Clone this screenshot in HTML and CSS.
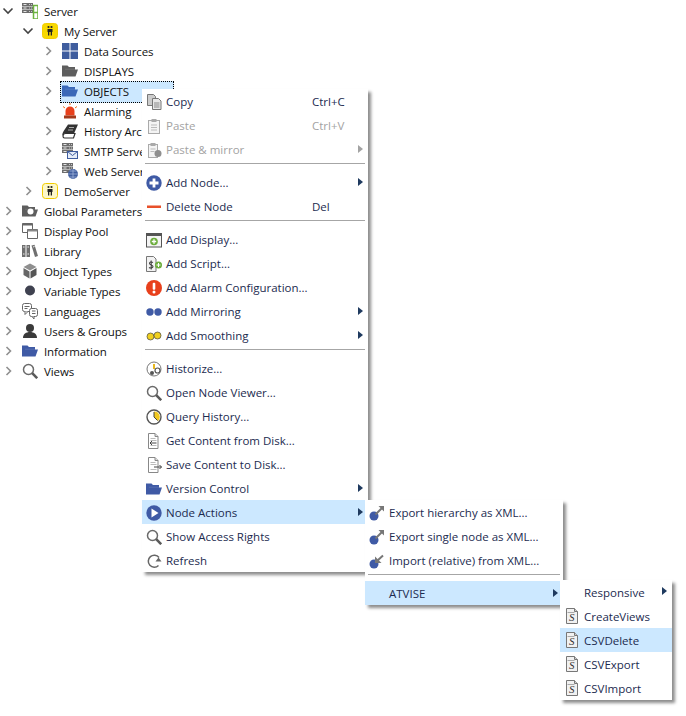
FILE: index.html
```html
<!DOCTYPE html>
<html lang="en">
<head>
<meta charset="utf-8">
<title>Server tree</title>
<link rel="stylesheet" href="styles.css">
</head>
<body>
<svg class="defs" width="0" height="0" aria-hidden="true">
  <symbol id="chev-r" viewBox="0 0 16 16"><path d="M6.500 4 10.500 8l-4 4" fill="none" stroke="#8f8f8f" stroke-width="1.600"/></symbol>
  <symbol id="chev-d" viewBox="0 0 16 16"><path d="M3.500 5.500 8 10l4.500-4.500" fill="none" stroke="#444" stroke-width="1.600"/></symbol>
  <symbol id="folder" viewBox="0 0 16 16"><path d="M0 2.500h5.500l1.500 1.500h6v9.500H0z" fill="currentColor"/><path d="M13 6.500h3L13.500 13.500H13z" fill="currentColor"/><path d="M3 6.200h10" stroke="#fff" stroke-opacity=".12"/></symbol>
  <symbol id="mag" viewBox="0 0 16 16"><circle cx="6.500" cy="6.500" r="5" fill="#fff" stroke="#6a6a6a" stroke-width="1.500"/><path d="M10.200 10.200l5 5" stroke="#5a5a5a" stroke-width="2.600"/></symbol>
  <symbol id="yellow" viewBox="0 0 16 16"><rect x=".5" y=".5" width="15" height="15" rx="3" fill="currentColor" stroke="#f2cc00"/><circle cx="6.500" cy="4" r="1.100" fill="#222"/><circle cx="9.500" cy="4" r="1.100" fill="#222"/><path d="M5.500 6h5v3H10v3.500H8.700V9h-1.400v3.500H6V9h-.5z" fill="#222"/></symbol>
  <symbol id="srv" viewBox="0 0 16 16"><path d="M0 0h11v3H0zM0 3.500h11v3H0zM0 7h11v3H0z" fill="#6d6d6d"/><path d="M1.500 1.500h3M1.500 5h3M1.500 8.500h3M7 1.500h.8M9 1.500h.8M7 5h.8M9 5h.8M7 8.500h.8M9 8.500h.8" stroke="#e4e4e4"/></symbol>
  <symbol id="sdoc" viewBox="0 0 16 16"><path d="M2.500 .5h8l3 3v12h-11z" fill="#f1f1f1" stroke="#777"/><path d="M10.500 .5v3h3" fill="#ccc" stroke="#777"/><rect x="3.500" y="4" width="7" height="1" fill="#aaa"/></symbol>
  <symbol id="export" viewBox="0 0 16 16"><circle cx="5" cy="11" r="4.500" fill="#3f5aa5"/><path d="M6.500 9.500 13 3" stroke="#777" stroke-width="2"/><path d="M9.500 1h5.500v5.500z" fill="#777"/></symbol>
  <symbol id="import" viewBox="0 0 16 16"><circle cx="5" cy="11" r="4.500" fill="#3f5aa5"/><path d="M8 8l6-5.500" stroke="#777" stroke-width="2"/><path d="M6 3.500V10h6.500z" fill="#777"/></symbol>
  <symbol id="arrow-doc" viewBox="0 0 16 16"><path d="M2.500 .5h6.500l3 3v12H2.500z" fill="#fff" stroke="#888"/><path d="M9 .5v3h3" fill="#ddd" stroke="#888"/><path d="M4.500 5.500h5M4.500 7.500h6M4.500 12.500h6" stroke="#bbb"/></symbol>
</svg>

<ul class="tree">
  <li class="row l0"><svg class="chev"><use href="#chev-d"/></svg><svg class="ico"><use href="#srv"/><path d="M11.500 2.500h4.500v7h-4.500zM11.500 9.500h4.500v6.500h-4.500z" fill="#fff" stroke="#6cb33f" stroke-width="1.500"/></svg><span>Server</span></li>
  <li class="row l1"><svg class="chev"><use href="#chev-d"/></svg><svg class="ico c-yellow"><use href="#yellow"/></svg><span>My Server</span></li>
  <li class="row l2"><svg class="chev"><use href="#chev-r"/></svg><svg class="ico" viewBox="0 0 16 16"><path d="M0 0h7.500v7.500H0zM8.500 0H16v7.500H8.500zM0 8.500h7.500V16H0zM8.500 8.500H16V16H8.500z" fill="#3f5d9e"/></svg><span>Data Sources</span></li>
  <li class="row l2"><svg class="chev"><use href="#chev-r"/></svg><svg class="ico c-gray"><use href="#folder"/></svg><span>DISPLAYS</span></li>
  <li class="row l2 selected"><svg class="chev"><use href="#chev-r"/></svg><svg class="ico c-blue"><use href="#folder"/></svg><span class="sel-label">OBJECTS</span></li>
  <li class="row l2"><svg class="chev"><use href="#chev-r"/></svg><svg class="ico" viewBox="0 0 16 16"><path d="M3.500 12.500V8a4.500 4.500 0 0 1 9 0v4.500z" fill="#e8401c"/><rect x="2" y="12.500" width="12" height="3" fill="#a33a1c"/><path d="M1 3.500l2 1.500M15 3.500l-2 1.500M8 0v2" stroke="#e8701c"/></svg><span>Alarming</span></li>
  <li class="row l2"><svg class="chev"><use href="#chev-r"/></svg><svg class="ico" viewBox="0 0 16 16"><path d="M6 1.500h10L12 10.500H3C2 10.500 1 11.200.5 12.500 0 11 1 9 2 7.500z" fill="#333"/><path d="M1 13c0-1.500 1-2.500 2.500-2.500h9.500l-1.500 4.500H2.500C1.500 15 1 14 1 13z" fill="#fff" stroke="#333" stroke-width="1.200"/><path d="M7 4.500h5M6 7h5" stroke="#aaa"/></svg><span>History Archive</span></li>
  <li class="row l2"><svg class="chev"><use href="#chev-r"/></svg><svg class="ico"><use href="#srv"/><svg x="5" y="8" width="11" height="8" viewBox="0 0 11 8"><rect x=".5" y=".5" width="10" height="7" fill="#e6edf8" stroke="#3f5d9e"/><path d="M.5.500l5 4 5-4" fill="none" stroke="#3f5d9e"/></svg></svg><span>SMTP Server</span></li>
  <li class="row l2"><svg class="chev"><use href="#chev-r"/></svg><svg class="ico"><use href="#srv"/><circle cx="11" cy="11" r="5" fill="#3f5d9e"/><path d="M6 11h10M11 6v10M7.500 8h7M7.500 14h7" stroke="#a9bbdf" stroke-width=".7"/></svg><span>Web Server</span></li>
  <li class="row l1"><svg class="chev"><use href="#chev-r"/></svg><svg class="ico c-paleyellow"><use href="#yellow"/></svg><span>DemoServer</span></li>
  <li class="row l0"><svg class="chev"><use href="#chev-r"/></svg><svg class="ico c-gray"><use href="#folder"/><circle cx="8.500" cy="8.500" r="3" fill="#fff"/></svg><span>Global Parameters</span></li>
  <li class="row l0"><svg class="chev"><use href="#chev-r"/></svg><svg class="ico" viewBox="0 0 16 16"><path d="M.5.500h10v9h-10z" fill="#fff" stroke="#666"/><path d="M.5.500h10v2h-10z" fill="#666"/><path d="M5.500 6.500h10v9h-10z" fill="#fff" stroke="#666"/><path d="M5.500 6.500h10v2h-10z" fill="#888"/></svg><span>Display Pool</span></li>
  <li class="row l0"><svg class="chev"><use href="#chev-r"/></svg><svg class="ico" viewBox="0 0 16 16"><path d="M0 2h3.500v12H0zM4.500 2H8v12H4.500z" fill="#6f6f6f"/><path d="M9.500 2.500l3-.8L16 13l-3 1z" fill="#6f6f6f"/><path d="M1 4h1.500M5.500 4H7M1 11h1.500M5.500 11H7M11 4l1.500-.5" stroke="#eee"/></svg><span>Library</span></li>
  <li class="row l0"><svg class="chev"><use href="#chev-r"/></svg><svg class="ico" viewBox="0 0 16 16"><path d="M8 .5l6.500 3.500L8 7.500 1.500 4z" fill="#8f8f8f"/><path d="M1.500 5 7.500 8.500v7L1.500 12z" fill="#666"/><path d="M14.500 5 8.500 8.500v7l6-3.500z" fill="#555"/></svg><span>Object Types</span></li>
  <li class="row l0"><svg class="chev"><use href="#chev-r"/></svg><svg class="ico" viewBox="0 0 16 16"><circle cx="8" cy="7.500" r="5" fill="#3f4250"/></svg><span>Variable Types</span></li>
  <li class="row l0"><svg class="chev"><use href="#chev-r"/></svg><svg class="ico" viewBox="0 0 16 16"><rect x=".5" y=".5" width="9" height="8" rx="2" fill="#fff" stroke="#666"/><path d="M3 8.500v3l3-3" fill="#fff" stroke="#666"/><rect x="7.500" y="5.500" width="8" height="8" rx="2" fill="#fff" stroke="#666"/><path d="M10 13.500l2 2.500v-2.500" fill="#fff" stroke="#666"/><path d="M2.500 3.500h5M2.500 5.500h3M10 8h3.500M10 10.500h3.500" stroke="#666"/></svg><span>Languages</span></li>
  <li class="row l0"><svg class="chev"><use href="#chev-r"/></svg><svg class="ico" viewBox="0 0 16 16"><circle cx="8" cy="5" r="4" fill="#3a3a3a"/><path d="M1 15c0-4 3-6 7-6s7 2 7 6z" fill="#3a3a3a"/></svg><span>Users &amp; Groups</span></li>
  <li class="row l0"><svg class="chev"><use href="#chev-r"/></svg><svg class="ico c-navy"><use href="#folder"/></svg><span>Information</span></li>
  <li class="row l0"><svg class="chev"><use href="#chev-r"/></svg><svg class="ico"><use href="#mag"/></svg><span>Views</span></li>
</ul>

<div class="menu menu-main">
  <div class="item"><svg class="ico" viewBox="0 0 16 16"><path d="M1.500.5h6l2 2v9h-8z" fill="#ccc" stroke="#777"/><path d="M6.500 4.500h6l2.500 2.500v8.500H6.500z" fill="#e8e8e8" stroke="#777"/><path d="M8 9h5.500M8 11h5.500M8 13h5.500" stroke="#888"/></svg><span class="label">Copy</span><span class="key">Ctrl+C</span></div>
  <div class="item off"><svg class="ico" viewBox="0 0 16 16"><rect x="2.500" y="2.500" width="11" height="13" fill="#f4f4f4" stroke="#aaa"/><rect x="5.500" y="1" width="5" height="3" fill="#aaa"/><path d="M5 7h6M5 9.500h6M5 12h6" stroke="#bbb"/></svg><span class="label">Paste</span><span class="key">Ctrl+V</span></div>
  <div class="item off"><svg class="ico" viewBox="0 0 16 16"><rect x="2.500" y="2.500" width="9" height="13" fill="#f4f4f4" stroke="#aaa"/><rect x="4.500" y="1" width="5" height="3" fill="#aaa"/><path d="M4.500 7h5M4.500 9.500h4" stroke="#bbb"/><circle cx="12" cy="11.500" r="3.500" fill="#8f8f8f"/></svg><span class="label">Paste &amp; mirror</span><i class="tri"></i></div>
  <hr class="sep">
  <div class="item"><svg class="ico" viewBox="0 0 16 16"><circle cx="8" cy="8" r="7.700" fill="#3f5aa5"/><path d="M3.500 6.600h3.100V3.500h2.800v3.100h3.100v2.800H9.400v3.100H6.600V9.400H3.500z" fill="#fff"/></svg><span class="label">Add Node...</span><i class="tri"></i></div>
  <div class="item"><svg class="ico" viewBox="0 0 16 16"><rect x="1" y="6.500" width="14" height="2.500" fill="#e8502a"/></svg><span class="label">Delete Node</span><span class="key">Del</span></div>
  <hr class="sep">
  <div class="item"><svg class="ico" viewBox="0 0 16 16"><rect x=".5" y="1.500" width="15" height="13.500" fill="#f4f4f4" stroke="#555"/><rect x=".5" y="1.500" width="15" height="2.500" fill="#555"/><circle cx="8" cy="9.500" r="3.800" fill="#6cad3c"/><path d="M5.800 9.500h4.400M8 7.300v4.400" stroke="#fff" stroke-width="1.300"/></svg><span class="label">Add Display...</span></div>
  <div class="item"><svg class="ico" viewBox="0 0 16 16"><path d="M.5.500h7l2.500 2.500v12.500H.5z" fill="#f2f2f2" stroke="#777"/><circle cx="12.500" cy="9" r="3.500" fill="#6cad3c"/><path d="M10.500 9h4M12.500 7v4" stroke="#fff"/><path d="M7 6.500C5 5.500 3.500 6 3.500 7.500S7 9 7 10.500 4.500 12.500 3 11.500M5.200 4.500v9" fill="none" stroke="#444" stroke-width="1.100"/></svg><span class="label">Add Script...</span></div>
  <div class="item"><svg class="ico" viewBox="0 0 16 16"><circle cx="8" cy="8" r="8" fill="#e8401c"/><rect x="6.700" y="2.800" width="2.600" height="7" rx="1" fill="#fff"/><circle cx="8" cy="12" r="1.500" fill="#fff"/></svg><span class="label">Add Alarm Configuration...</span></div>
  <div class="item"><svg class="ico" viewBox="0 0 16 16"><circle cx="4" cy="8" r="3.700" fill="#3f5aa5"/><circle cx="12" cy="8" r="3.700" fill="#3f5aa5"/></svg><span class="label">Add Mirroring</span><i class="tri"></i></div>
  <div class="item"><svg class="ico" viewBox="0 0 16 16"><circle cx="4.500" cy="8.500" r="3.500" fill="#f0d020" stroke="#444" stroke-width=".7"/><circle cx="11.500" cy="7.500" r="3.500" fill="#f0d020" stroke="#444" stroke-width=".7"/></svg><span class="label">Add Smoothing</span><i class="tri"></i></div>
  <hr class="sep">
  <div class="item"><svg class="ico" viewBox="0 0 16 16"><circle cx="8" cy="8" r="7" fill="#fff" stroke="#777"/><path d="M7 3h2v5H7z" fill="#e8b820"/><circle cx="6" cy="12" r="2" fill="#555"/><circle cx="11.500" cy="9.500" r="2.500" fill="#fff" stroke="#555" stroke-width="1.200"/></svg><span class="label">Historize...</span></div>
  <div class="item"><svg class="ico"><use href="#mag"/></svg><span class="label">Open Node Viewer...</span></div>
  <div class="item"><svg class="ico" viewBox="0 0 16 16"><circle cx="8" cy="8" r="7" fill="#fff" stroke="#555" stroke-width="1.400"/><path d="M8 8V2.500A5.500 5.500 0 0 1 12 12z" fill="#f0c820"/><path d="M8 3v5l3.500 3.500" fill="none" stroke="#444"/></svg><span class="label">Query History...</span></div>
  <div class="item"><svg class="ico"><use href="#arrow-doc"/><path d="M4 10h6.500M4 10l2-2M4 10l2 2" fill="none" stroke="#444"/></svg><span class="label">Get Content from Disk...</span></div>
  <div class="item"><svg class="ico"><use href="#arrow-doc"/><path d="M8 10h7.500M15.500 10l-2-2M15.500 10l-2 2" fill="none" stroke="#444"/></svg><span class="label">Save Content to Disk...</span></div>
  <div class="item"><svg class="ico c-navy"><use href="#folder"/></svg><span class="label">Version Control</span><i class="tri"></i></div>
  <div class="item on"><svg class="ico" viewBox="0 0 16 16"><circle cx="8" cy="8" r="7.700" fill="#3f5aa5"/><path d="M5.500 3.500 12.500 8l-7 4.500z" fill="#fff"/></svg><span class="label">Node Actions</span><i class="tri"></i></div>
  <div class="item"><svg class="ico"><use href="#mag"/></svg><span class="label">Show Access Rights</span></div>
  <div class="item"><svg class="ico" viewBox="0 0 16 16"><path d="M12.500 12.500A6 6 0 1 1 13 4.500" fill="none" stroke="#666" stroke-width="1.500"/><path d="M15.500 8.500h-6l3-4z" fill="#666"/></svg><span class="label">Refresh</span></div>
</div>

<div class="menu menu-sub">
  <div class="item"><svg class="ico"><use href="#export"/></svg><span class="label">Export hierarchy as XML...</span></div>
  <div class="item"><svg class="ico"><use href="#export"/></svg><span class="label">Export single node as XML...</span></div>
  <div class="item"><svg class="ico"><use href="#import"/></svg><span class="label">Import (relative) from XML...</span></div>
  <hr class="sep">
  <div class="item on"><span class="ico"></span><span class="label">ATVISE</span><i class="tri"></i></div>
</div>

<div class="menu menu-third">
  <div class="item"><span class="ico"></span><span class="label">Responsive</span><i class="tri"></i></div>
  <div class="item"><svg class="ico"><use href="#sdoc"/><text class="s" x="5" y="13">S</text></svg><span class="label">CreateViews</span></div>
  <div class="item on"><svg class="ico"><use href="#sdoc"/><text class="s" x="5" y="13">S</text></svg><span class="label">CSVDelete</span></div>
  <div class="item"><svg class="ico"><use href="#sdoc"/><text class="s" x="5" y="13">S</text></svg><span class="label">CSVExport</span></div>
  <div class="item"><svg class="ico"><use href="#sdoc"/><text class="s" x="5" y="13">S</text></svg><span class="label">CSVImport</span></div>
</div>
</body>
</html>
```
FILE: styles.css
```css
* { box-sizing: border-box; }
html, body { margin: 0; padding: 0; }
body {
  position: relative;
  width: 686px;
  height: 716px;
  overflow: hidden;
  background: #fff;
  font-family: "Open Sans", "Noto Sans", sans-serif;
  font-size: 11.5px;
  color: #111;
}
.defs { position: absolute; }
.tree { list-style: none; margin: 0; padding: 1px 0 0; letter-spacing: -.1px; }
.row { display: flex; align-items: center; height: 20px; white-space: nowrap; }
.l0 { padding-left: 0; }
.l1 { padding-left: 20px; }
.l2 { padding-left: 40px; }
.chev { width: 16px; height: 16px; flex: none; }
.ico { width: 16px; height: 16px; flex: none; display: block; }
.row .ico { margin: 0 6px; }
.selected { position: relative; }
.selected::before {
  content: "";
  position: absolute;
  left: 60px;
  top: 0;
  width: 112px;
  height: 20px;
  background: #cce8ff;
  border: 1px dotted #000;
  z-index: -1;
}
.c-yellow { color: #f7d800; }
.c-paleyellow { color: #fdf8c8; }
.c-gray { color: #5e5e5e; }
.c-blue { color: #3a68b8; }
.c-navy { color: #3f5aa5; }

.menu {
  position: absolute;
  background: #fff;
  box-shadow: 3px 3px 3px rgba(0, 0, 0, .45);
  color: #1c2b4f;
}
.menu-main { left: 142px; top: 89px; width: 226px; padding-right: 3px; }
.menu-sub { left: 365px; top: 500px; width: 198px; padding-right: 3px; }
.menu-third { left: 560px; top: 580px; width: 112px; }
.item { display: flex; align-items: center; height: 24px; padding: 1px 0 0 4px; position: relative; white-space: nowrap; }
.menu-third .item { padding-top: 0; }
.item.on { background: #cce8ff; }
.item.off { color: #a3a3a3; }
.label { margin-left: 4px; flex: 1; }
.key { position: absolute; left: 170px; }
.tri {
  position: absolute;
  right: 2px;
  top: 8px;
  border-left: 5px solid #1f3a5f;
  border-top: 4.500px solid transparent;
  border-bottom: 4.500px solid transparent;
}
.menu-third .tri { right: 5px; top: 7px; }
.off .tri { border-left-color: #a3a3a3; }
.sep { margin: 2px 0 6px 3px; height: 1px; border: 0; background: #a6a6a6; }
.s { font-family: "Liberation Serif", serif; font-size: 11px; font-style: italic; fill: #333; }
```
